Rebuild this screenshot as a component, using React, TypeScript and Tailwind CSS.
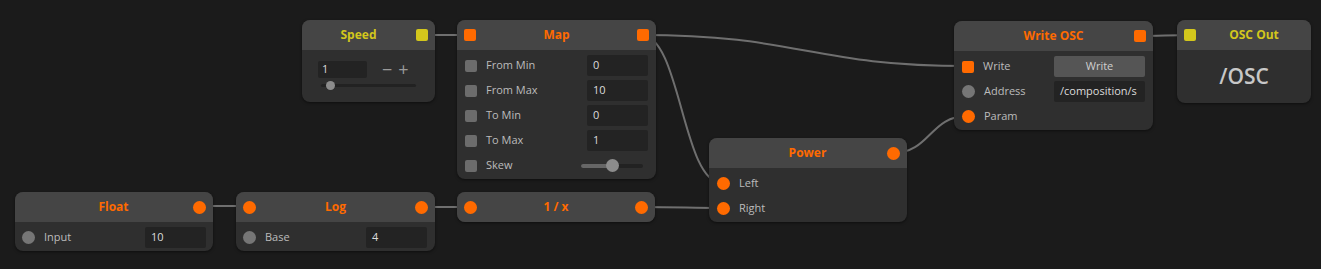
import type { ReactNode } from "react";

const ORANGE = "#ff6a00";
const YELLOW = "#d3c71c";

type PortKind = "sq" | "dot" | "sqY" | "grayDot" | "check" | null;

function Port({ kind }: { kind: PortKind }) {
  if (kind === "sq") return <div className="h-[12px] w-[12px] shrink-0 rounded-[2px] bg-[#ff6a00]" />;
  if (kind === "sqY") return <div className="h-[12px] w-[12px] shrink-0 rounded-[2px] bg-[#d3c71c]" />;
  if (kind === "dot") return <div className="h-[13px] w-[13px] shrink-0 rounded-full bg-[#ff6a00]" />;
  if (kind === "grayDot") return <div className="h-[13px] w-[13px] shrink-0 rounded-full bg-[#767676]" />;
  if (kind === "check") return <div className="h-[12px] w-[12px] shrink-0 rounded-[2px] bg-[#6c6c6c]" />;
  return <div className="h-[12px] w-[12px] shrink-0" />;
}

function Node({
  x,
  y,
  w,
  title,
  color = ORANGE,
  left,
  right,
  compact,
  children,
}: {
  x: number;
  y: number;
  w: number;
  title: string;
  color?: string;
  left?: PortKind;
  right?: PortKind;
  compact?: boolean;
  children?: ReactNode;
}) {
  return (
    <div
      className="absolute overflow-hidden rounded-[8px] bg-[#2f2f2f] shadow-[0_1px_3px_rgba(0,0,0,0.5)]"
      style={{ left: x, top: y, width: w }}
    >
      <div className="flex h-[30px] items-center gap-2 bg-[#454545] px-[7px]">
        {(left || !compact) && <Port kind={left ?? null} />}
        <div className="flex-1 text-center text-[12px] font-bold" style={{ color }}>
          {title}
        </div>
        {(right || !compact) && <Port kind={right ?? null} />}
      </div>
      {children}
    </div>
  );
}

function Body({ children }: { children: ReactNode }) {
  return <div className="pb-[1px] pt-[3px]">{children}</div>;
}

function Row({ port, label, children }: { port: PortKind; label: string; children?: ReactNode }) {
  return (
    <div className="flex h-[25px] items-center pl-[8px] pr-[8px]">
      <Port kind={port} />
      <span className="ml-[9px] flex-1 text-[11px] text-[#bcbcbc]">{label}</span>
      {children}
    </div>
  );
}

function Field({ value, w = 61 }: { value: string; w?: number }) {
  return (
    <div
      className="flex h-[21px] items-center overflow-hidden whitespace-nowrap rounded-[2px] bg-[#232323] pl-[6px] text-[11px] text-[#dcdcdc]"
      style={{ width: w }}
    >
      {value}
    </div>
  );
}

const wires = [
  "M420 35 H470",
  "M641 35 C 800 35, 810 66, 968 66",
  "M641 35 C 681 35, 682 183, 722 183",
  "M199 206 H249",
  "M420 207 H470",
  "M641 207 C 680 207, 690 208, 722 208",
  "M893 153 C 930 153, 930 116, 967 116",
  "M1138 36 C 1160 36, 1170 35, 1193 35",
];

export default function App() {
  return (
    <div
      className="relative h-[269px] w-[1321px] overflow-hidden bg-[#1b1b1b]"
      style={{ fontFamily: '"Open Sans", "Noto Sans", sans-serif' }}
    >
      <svg className="absolute inset-0" width={1321} height={269}>
        {wires.map((d) => (
          <path key={d} d={d} fill="none" stroke="#6f6f6f" strokeWidth={2} />
        ))}
      </svg>

      <Node x={302} y={20} w={133} title="Speed" color={YELLOW} right="sqY" compact>
        <div className="h-[52px] px-[16px] pt-[10px]">
          <div className="flex items-center">
            <div className="flex h-[17px] w-[49px] items-center rounded-[2px] bg-[#232323] pl-[4px] text-[11px] text-[#dcdcdc]">
              1
            </div>
            <span className="ml-[15px] text-[18px] leading-none text-[#9a9a9a]">−</span>
            <span className="ml-[6px] text-[18px] leading-none text-[#9a9a9a]">+</span>
          </div>
          <div className="relative ml-[3px] mt-[6px] h-[3px] w-[95px] rounded-full bg-[#222]">
            <div className="absolute left-[5px] top-[-3px] h-[9px] w-[9px] rounded-full bg-[#8c8c8c]" />
          </div>
        </div>
      </Node>

      <Node x={457} y={20} w={199} title="Map" left="sq" right="sq">
        <Body>
          <Row port="check" label="From Min">
            <Field value="0" />
          </Row>
          <Row port="check" label="From Max">
            <Field value="10" />
          </Row>
          <Row port="check" label="To Min">
            <Field value="0" />
          </Row>
          <Row port="check" label="To Max">
            <Field value="1" />
          </Row>
          <Row port="check" label="Skew">
            <div className="relative mr-[5px] flex h-[4px] w-[62px] rounded-full bg-[#222]">
              <div className="h-full w-[31px] rounded-l-full bg-[#666]" />
              <div className="absolute left-[25px] top-[-5px] h-[13px] w-[13px] rounded-full bg-[#8c8c8c]" />
            </div>
          </Row>
        </Body>
      </Node>

      <Node x={15} y={192} w={198} title="Float" right="dot">
        <Body>
          <div className="[&>div]:pl-[7px] [&>div]:pr-[7px]">
            <Row port="grayDot" label="Input">
              <Field value="10" />
            </Row>
          </div>
        </Body>
      </Node>

      <Node x={236} y={192} w={199} title="Log" left="dot" right="dot">
        <Body>
          <div className="[&>div]:pl-[7px]">
            <Row port="grayDot" label="Base">
              <Field value="4" />
            </Row>
          </div>
        </Body>
      </Node>

      <Node x={457} y={192} w={198} title="1 / x" left="dot" right="dot" />

      <Node x={709} y={138} w={198} title="Power" right="dot">
        <Body>
          <Row port="dot" label="Left" />
          <Row port="dot" label="Right" />
        </Body>
      </Node>

      <Node x={954} y={21} w={199} title="Write OSC" right="sq">
        <Body>
          <Row port="sq" label="Write">
            <div className="flex h-[21px] w-[91px] items-center justify-center rounded-[2px] bg-[#555] text-[11px] text-[#cfcfcf]">
              Write
            </div>
          </Row>
          <Row port="grayDot" label="Address">
            <Field value="/composition/s" w={91} />
          </Row>
          <Row port="dot" label="Param" />
        </Body>
      </Node>

      <Node x={1177} y={20} w={134} title="OSC Out" color={YELLOW} left="sqY" compact>
        <div className="flex h-[53px] items-center justify-center text-[21px] font-semibold text-[#c8c8c8]">
          /OSC
        </div>
      </Node>
    </div>
  );
}
